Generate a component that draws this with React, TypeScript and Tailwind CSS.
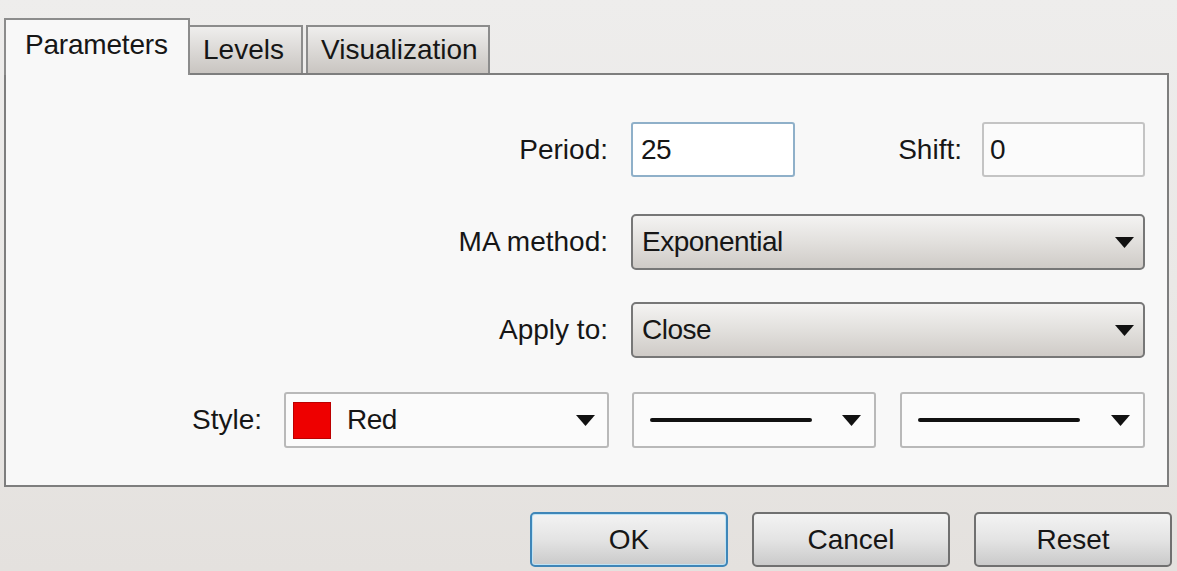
import React from "react";

const font = { fontFamily: '"Liberation Sans", Arial, sans-serif' };

function Arrow() {
  return (
    <svg width="19" height="11" viewBox="0 0 19 11" className="shrink-0">
      <polygon points="0,0 19,0 9.5,11" fill="#111" />
    </svg>
  );
}

function Label({ children, w }: { children: React.ReactNode; w: string }) {
  return <div className={`${w} text-right text-[28px] leading-[32px]`}>{children}</div>;
}

function Combo({ children }: { children: React.ReactNode }) {
  return (
    <div className="flex h-[56px] w-[514px] items-center justify-between rounded-[5px] border-2 border-[#777] bg-gradient-to-b from-[#f4f3f2] via-[#e2e0dd] to-[#cfcbc7] pl-[9px] pr-[9px] text-[28px] leading-[32px] tracking-[-0.5px]">
      <span>{children}</span>
      <Arrow />
    </div>
  );
}

export default function App() {
  return (
    <div
      className="flex h-[571px] w-[1177px] flex-col bg-gradient-to-b from-[#eeedec] via-[#eae8e6] to-[#e4e1de] text-[#161616]"
      style={font}
    >
      {/* tabs */}
      <div className="flex items-end pl-[4px] pt-[18px]">
        <div className="relative z-10 -mb-[2px] h-[57px] w-[186px] border-2 border-b-0 border-[#8c8c8c] bg-[#f8f8f8] pl-[19px] pt-[9px] text-[28px] leading-[32px] tracking-[-0.2px]">
          Parameters
        </div>
        <div className="h-[48px] w-[113px] border-2 border-b-0 border-l-0 border-[#8c8c8c] bg-gradient-to-b from-[#efeeed] to-[#c9c5c1] pl-[13px] pt-[7px] text-[28px] leading-[32px]">
          Levels
        </div>
        <div className="ml-[3px] h-[48px] w-[184px] border-2 border-b-0 border-[#8c8c8c] bg-gradient-to-b from-[#efeeed] to-[#c9c5c1] pl-[13px] pt-[7px] text-[28px] leading-[32px]">
          Visualization
        </div>
      </div>

      {/* panel */}
      <div className="ml-[4px] h-[414px] w-[1165px] border-2 border-[#7e7e7e] bg-[#f8f8f8] pt-[47px]">
        {/* period / shift */}
        <div className="flex items-center">
          <Label w="w-[602px]">Period:</Label>
          <div className="ml-[23px] flex h-[55px] w-[164px] items-center rounded-[3px] border-2 border-[#8fb0c9] bg-white pl-[8px] text-[28px] tracking-[-0.5px]">
            25
          </div>
          <Label w="w-[167px]">Shift:</Label>
          <div className="ml-[20px] flex h-[55px] w-[163px] items-center rounded-[3px] border-2 border-[#c4c4c4] bg-[#fbfbfb] pl-[6px] text-[28px] tracking-[-0.5px]">
            0
          </div>
        </div>

        {/* MA method */}
        <div className="mt-[37px] flex items-center">
          <Label w="w-[602px]">MA method:</Label>
          <div className="ml-[23px]">
            <Combo>Exponential</Combo>
          </div>
        </div>

        {/* Apply to */}
        <div className="mt-[32px] flex items-center">
          <Label w="w-[602px]">Apply to:</Label>
          <div className="ml-[23px]">
            <Combo>Close</Combo>
          </div>
        </div>

        {/* Style */}
        <div className="mt-[34px] flex items-center">
          <Label w="w-[256px]">Style:</Label>
          <div className="ml-[22px] flex h-[56px] w-[325px] items-center rounded-[3px] border-2 border-[#b9b9b9] bg-[#fbfbfb] pl-[7px] pr-[12px]">
            <div className="h-[37px] w-[38px] border border-[#b00] bg-[#ee0000]" />
            <span className="ml-[16px] flex-1 text-[28px] leading-[32px] tracking-[-0.5px]">Red</span>
            <Arrow />
          </div>
          <div className="ml-[23px] flex h-[56px] w-[244px] items-center rounded-[3px] border-2 border-[#b9b9b9] bg-[#fbfbfb] pl-[16px] pr-[13px]">
            <div className="h-[4px] w-[162px] rounded-full bg-[#111]" />
            <div className="flex-1" />
            <Arrow />
          </div>
          <div className="ml-[24px] flex h-[56px] w-[245px] items-center rounded-[3px] border-2 border-[#b9b9b9] bg-[#fbfbfb] pl-[16px] pr-[13px]">
            <div className="h-[4px] w-[162px] rounded-full bg-[#111]" />
            <div className="flex-1" />
            <Arrow />
          </div>
        </div>
      </div>

      {/* buttons */}
      <div className="mt-[25px] flex justify-end gap-[24px] pr-[5px]">
        <button className="h-[55px] w-[198px] rounded-[5px] border-2 border-[#3f86b8] bg-gradient-to-b from-[#f3f3f3] via-[#e4e4e4] to-[#cacaca] text-[28px] shadow-[inset_0_0_0_1px_#bfe3f5]">
          OK
        </button>
        <button className="h-[55px] w-[198px] rounded-[5px] border-2 border-[#707070] bg-gradient-to-b from-[#f3f3f3] via-[#e4e4e4] to-[#cacaca] text-[28px]">
          Cancel
        </button>
        <button className="h-[55px] w-[198px] rounded-[5px] border-2 border-[#707070] bg-gradient-to-b from-[#f3f3f3] via-[#e4e4e4] to-[#cacaca] text-[28px]">
          Reset
        </button>
      </div>
    </div>
  );
}
